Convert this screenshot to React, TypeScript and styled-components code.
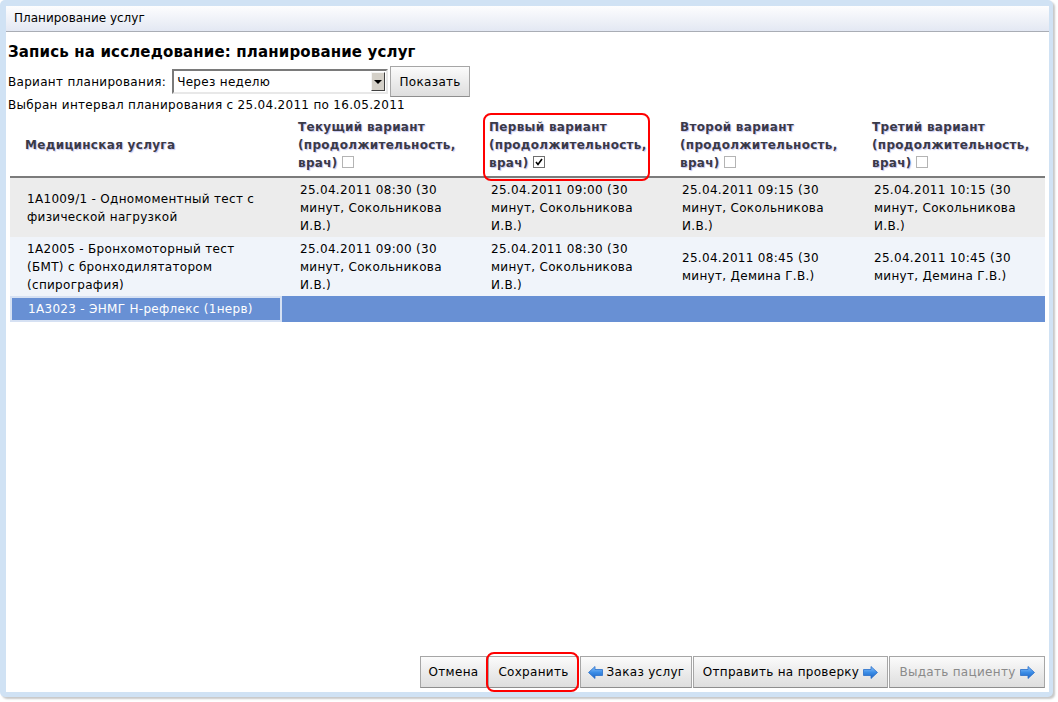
import React from "react";
import styled, { createGlobalStyle, css } from "styled-components";

const GlobalStyle = createGlobalStyle`
  html, body { margin: 0; padding: 0; background: #ffffff; }
  body {
    font-family: "DejaVu Sans", Verdana, sans-serif;
    font-size: 12px;
    letter-spacing: 0.3px;
    color: #000;
  }
  #root { width: 1058px; height: 702px; overflow: hidden; }
`;

const Frame = styled.div`
  box-sizing: border-box;
  width: 1053px;
  height: 697px;
  padding: 6px 4px 5px 6px;
  background: #d0e2f4;
  border-radius: 5px;
  box-shadow: 2px 2px 2px rgba(0, 0, 0, 0.22);
  display: flex;
`;

const Window = styled.div`
  flex: 1;
  display: flex;
  flex-direction: column;
  background: #ffffff;
  min-width: 0;
`;

const TitleBar = styled.div`
  height: 25px;
  line-height: 25px;
  padding-left: 8px;
  border-bottom: 1px solid #a9adb5;
  background: linear-gradient(#fdfdfe, #e3e8f3);
  font-size: 12px;
  letter-spacing: 0;
  color: #000;
`;

const Content = styled.div`
  flex: 1;
  display: flex;
  flex-direction: column;
  padding: 0 4px 4px 2px;
`;

const Heading = styled.h1`
  margin: 10px 0 4px;
  font-size: 15px;
  line-height: 20px;
  letter-spacing: 0.15px;
  font-weight: bold;
  color: #000;
`;

const FilterRow = styled.div`
  display: flex;
  align-items: center;
  height: 31px;
`;

const Label = styled.span`
  margin-right: 6px;
`;

const Select = styled.div`
  box-sizing: border-box;
  width: 216px;
  height: 25px;
  display: flex;
  align-items: center;
  border-style: solid;
  border-width: 2px;
  border-color: #7a7a7a #e8e8e8 #e8e8e8 #7a7a7a;
  background: #ffffff;
  padding-left: 3px;
  margin-right: 2px;
`;

const SelectValue = styled.span`
  flex: 1;
`;

const DropButton = styled.span`
  box-sizing: border-box;
  width: 14px;
  height: 19px;
  margin-right: 1px;
  background: #d4d0c8;
  border-style: solid;
  border-width: 1px;
  border-color: #f4f4f4 #404040 #404040 #f4f4f4;
  display: flex;
  align-items: center;
  justify-content: center;
  &::after {
    content: "";
    border-left: 4px solid transparent;
    border-right: 4px solid transparent;
    border-top: 4px solid #000;
  }
`;

const buttonSkin = css`
  box-sizing: border-box;
  font-family: "DejaVu Sans", Verdana, sans-serif;
  font-size: 12px;
  letter-spacing: 0.3px;
  border: 1px solid #a6a6a6;
  border-bottom-color: #8e8e8e;
  background: linear-gradient(#fbfbfb, #e9e9e9 60%, #dedede);
  color: #000;
  padding: 0;
  display: flex;
  align-items: center;
  justify-content: center;
  gap: 4px;
`;

const ShowButton = styled.button`
  ${buttonSkin};
  width: 80px;
  height: 31px;
`;

const Info = styled.div`
  line-height: 16px;
`;

const Table = styled.table`
  width: calc(100% - 2px);
  margin-left: 2px;
  border-collapse: collapse;
  table-layout: fixed;
`;

const HeadCell = styled.th<{ $marked?: boolean }>`
  position: relative;
  height: 63px;
  padding: 0 4px 0 15px;
  text-align: left;
  vertical-align: middle;
  font-weight: bold;
  font-size: 12px;
  line-height: 18px;
  color: #3a3a48;
  text-shadow: 1px 1px 1px #c6c6f0;
  border-bottom: 2px solid #7b7b7b;
  ${(p) =>
    p.$marked &&
    css`
      &::after {
        content: "";
        position: absolute;
        left: 9px;
        right: 15px;
        top: 0;
        bottom: -5px;
        border: 2px solid #ff0000;
        border-radius: 8px;
      }
    `}
`;

const Row = styled.tr<{ $tone: "gray" | "blue" | "selected" }>`
  background: ${(p) =>
    p.$tone === "gray" ? "#ececec" : p.$tone === "blue" ? "#f0f4fa" : "#6890d4"};
  color: ${(p) => (p.$tone === "selected" ? "#ffffff" : "#000000")};
`;

const Cell = styled.td`
  height: 59px;
  padding: 0 18px 0 17px;
  vertical-align: middle;
  line-height: 18px;
`;

const SelectedCell = styled.td`
  height: 26px;
  padding: 0;
`;

const SelectedBox = styled.div`
  box-sizing: border-box;
  height: 26px;
  margin-right: 1px;
  border: 2px solid #d6e1f3;
  padding-left: 16px;
  line-height: 22px;
  color: #ffffff;
`;

const Box = styled.span<{ $checked?: boolean }>`
  box-sizing: border-box;
  display: inline-block;
  width: 12px;
  height: 12px;
  margin-left: 4px;
  vertical-align: -1px;
  border: 1px solid ${(p) => (p.$checked ? "#6f6f6f" : "#b4b4b4")};
  background: #ffffff;
  position: relative;
  svg {
    position: absolute;
    left: 1px;
    top: 1px;
  }
`;

const Footer = styled.div`
  margin-top: auto;
  display: flex;
  justify-content: flex-end;
  gap: 1px;
`;

const ToolButton = styled.button<{ $w: number; $disabled?: boolean; $marked?: boolean }>`
  ${buttonSkin};
  position: relative;
  width: ${(p) => p.$w}px;
  height: 32px;
  color: ${(p) => (p.$disabled ? "#8a8a8a" : "#000")};
  ${(p) =>
    p.$marked &&
    css`
      &::after {
        content: "";
        position: absolute;
        left: -3px;
        right: -1px;
        top: -5px;
        bottom: -5px;
        border: 2px solid #ff0000;
        border-radius: 8px;
      }
    `}
`;

const Arrow = ({ dir }: { dir: "left" | "right" }) => (
  <svg width="15" height="13" viewBox="0 0 15 13">
    <defs>
      <linearGradient id={`ag-${dir}`} x1="0" y1="0" x2="0" y2="1">
        <stop offset="0" stopColor="#8cc4ff" />
        <stop offset="0.5" stopColor="#3b8de6" />
        <stop offset="1" stopColor="#1d64c4" />
      </linearGradient>
    </defs>
    <polygon
      points={
        dir === "left"
          ? "0.5,6.5 7,0.5 7,3.5 14.5,3.5 14.5,9.5 7,9.5 7,12.5"
          : "14.5,6.5 8,0.5 8,3.5 0.5,3.5 0.5,9.5 8,9.5 8,12.5"
      }
      fill={`url(#ag-${dir})`}
      stroke="#2a6fc9"
      strokeWidth="0.8"
      strokeLinejoin="round"
    />
  </svg>
);

const Check = ({ checked }: { checked?: boolean }) => (
  <Box $checked={checked}>
    {checked && (
      <svg width="8" height="8" viewBox="0 0 8 8">
        <path d="M1 4 L3 6.5 L7 1" fill="none" stroke="#000" strokeWidth="1.6" />
      </svg>
    )}
  </Box>
);

const variants = [
  { title: "Текущий вариант", checked: false, marked: false },
  { title: "Первый вариант", checked: true, marked: true },
  { title: "Второй вариант", checked: false, marked: false },
  { title: "Третий вариант", checked: false, marked: false },
];

const rows: { service: string; slots: string[]; tone: "gray" | "blue" }[] = [
  {
    service: "1A1009/1 - Одномоментный тест с физической нагрузкой",
    slots: [
      "25.04.2011 08:30 (30 минут, Сокольникова И.В.)",
      "25.04.2011 09:00 (30 минут, Сокольникова И.В.)",
      "25.04.2011 09:15 (30 минут, Сокольникова И.В.)",
      "25.04.2011 10:15 (30 минут, Сокольникова И.В.)",
    ],
    tone: "gray",
  },
  {
    service: "1A2005 - Бронхомоторный тест (БМТ) с бронходилятатором (спирография)",
    slots: [
      "25.04.2011 09:00 (30 минут, Сокольникова И.В.)",
      "25.04.2011 08:30 (30 минут, Сокольникова И.В.)",
      "25.04.2011 08:45 (30 минут, Демина Г.В.)",
      "25.04.2011 10:45 (30 минут, Демина Г.В.)",
    ],
    tone: "blue",
  },
];

export default function App() {
  return (
    <>
      <GlobalStyle />
      <Frame>
        <Window>
          <TitleBar>Планирование услуг</TitleBar>
          <Content>
            <Heading>Запись на исследование: планирование услуг</Heading>
            <FilterRow>
              <Label>Вариант планирования:</Label>
              <Select>
                <SelectValue>Через неделю</SelectValue>
                <DropButton />
              </Select>
              <ShowButton>Показать</ShowButton>
            </FilterRow>
            <Info>Выбран интервал планирования с 25.04.2011 по 16.05.2011</Info>
            <Table>
              <colgroup>
                <col style={{ width: 273 }} />
                <col style={{ width: 191 }} />
                <col style={{ width: 191 }} />
                <col style={{ width: 192 }} />
                <col />
              </colgroup>
              <thead>
                <tr>
                  <HeadCell>Медицинская услуга</HeadCell>
                  {variants.map((v) => (
                    <HeadCell key={v.title} $marked={v.marked}>
                      {v.title} (продолжительность, врач)
                      <Check checked={v.checked} />
                    </HeadCell>
                  ))}
                </tr>
              </thead>
              <tbody>
                {rows.map((r) => (
                  <Row key={r.service} $tone={r.tone}>
                    <Cell>{r.service}</Cell>
                    {r.slots.map((s, i) => (
                      <Cell key={i}>{s}</Cell>
                    ))}
                  </Row>
                ))}
                <Row $tone="selected">
                  <SelectedCell>
                    <SelectedBox>1A3023 - ЭНМГ Н-рефлекс (1нерв)</SelectedBox>
                  </SelectedCell>
                  <SelectedCell colSpan={4} />
                </Row>
              </tbody>
            </Table>
            <Footer>
              <ToolButton $w={67}>Отмена</ToolButton>
              <ToolButton $w={91} $marked>
                Сохранить
              </ToolButton>
              <ToolButton $w={112}>
                <Arrow dir="left" />
                Заказ услуг
              </ToolButton>
              <ToolButton $w={195}>
                Отправить на проверку
                <Arrow dir="right" />
              </ToolButton>
              <ToolButton $w={156} $disabled>
                Выдать пациенту
                <Arrow dir="right" />
              </ToolButton>
            </Footer>
          </Content>
        </Window>
      </Frame>
    </>
  );
}
